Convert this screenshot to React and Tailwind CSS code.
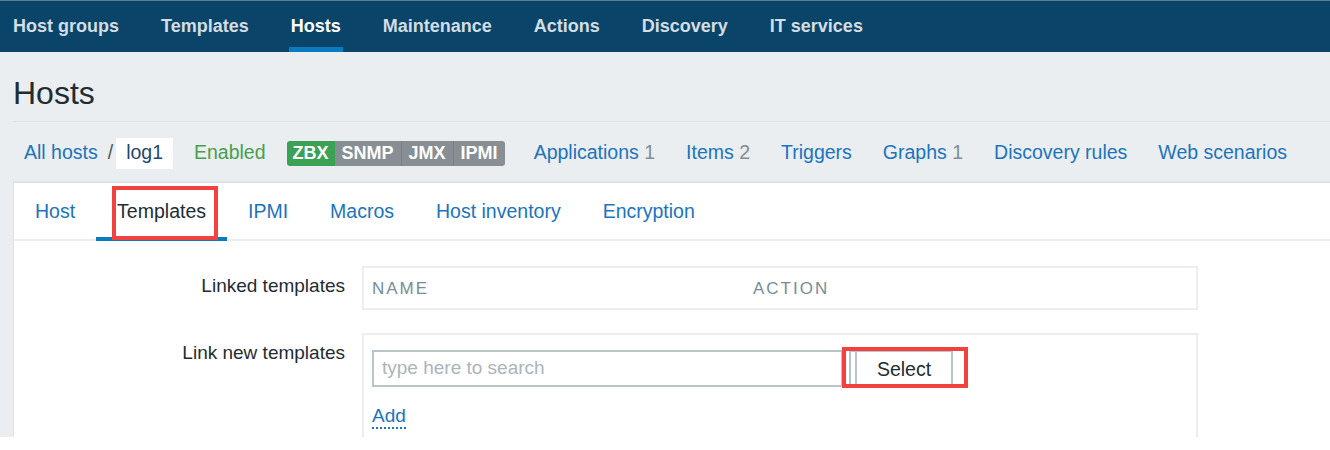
import React from 'react';

const navItems = ['Host groups', 'Templates', 'Hosts', 'Maintenance', 'Actions', 'Discovery', 'IT services'];

const hostLinks = [
  { label: 'Applications', count: '1' },
  { label: 'Items', count: '2' },
  { label: 'Triggers' },
  { label: 'Graphs', count: '1' },
  { label: 'Discovery rules' },
  { label: 'Web scenarios' },
];

const tabs = ['Host', 'Templates', 'IPMI', 'Macros', 'Host inventory', 'Encryption'];

const App = () => {
  return (
    <div className="w-[1330px] h-[450px] bg-white font-['Liberation_Sans',Arial,sans-serif] overflow-hidden">
      <div className="h-[437px] bg-[#ebeef0] overflow-hidden flex flex-col">
        {/* Top menu */}
        <nav className="h-[52px] shrink-0 bg-[#0a4569] border-t border-[#5d7f95] flex pl-[11px] gap-[38px]">
          {navItems.map((item) => (
            <a
              key={item}
              className={`h-full flex items-center pt-[4px] px-[2px] border-b-[5px] text-[18px] font-bold ${
                item === 'Hosts' ? 'text-white border-[#0b7bc0]' : 'text-[#d3dde4] border-transparent'
              }`}
            >
              {item}
            </a>
          ))}
        </nav>

        {/* Page title */}
        <h1 className="mt-[25px] ml-[13px] text-[32px] leading-none text-[#1f2c33]">Hosts</h1>

        {/* Host navigation */}
        <div className="mt-[12px] ml-[13px] h-[62px] shrink-0 border-t border-b-2 border-[#dde3e7] flex items-center pt-[3px] pl-[11px] text-[19.5px]">
          <a className="text-[#1b74bd]">All hosts</a>
          <span className="ml-[10px] text-[#4a5a63]">/</span>
          <span className="ml-[3px] bg-white h-[31px] px-[10px] flex items-center text-[#24466e]">log1</span>
          <span className="ml-[21px] text-[#46a04b]">Enabled</span>
          <div className="ml-[21px] flex h-[25px] text-[18px] font-bold text-white">
            <span className="bg-[#3aa155] px-[6px] flex items-center rounded-l-[3px]">ZBX</span>
            <span className="bg-[#878f94] px-[7px] flex items-center">SNMP</span>
            <span className="bg-[#878f94] px-[7px] flex items-center border-l border-[#7a8287]">JMX</span>
            <span className="bg-[#878f94] px-[7px] flex items-center border-l border-[#7a8287] rounded-r-[3px]">IPMI</span>
          </div>
          <div className="ml-[29px] flex gap-[31px]">
            {hostLinks.map((l) => (
              <a key={l.label} className="text-[#1b74bd]">
                {l.label}
                {l.count && <span className="text-[#7f8d95]"> {l.count}</span>}
              </a>
            ))}
          </div>
        </div>

        {/* Form panel */}
        <div className="ml-[13px] flex-1 bg-white border-l border-[#dde3e7]">
          <div className="flex h-[58px] border-b-2 border-[#ebeef0]">
            {tabs.map((t) => (
              <div
                key={t}
                className={`relative h-[58px] -mb-[2px] pt-[3px] px-[21px] flex items-center border-b-4 text-[19.5px] ${
                  t === 'Templates' ? 'border-[#0b7bc0] text-[#1f2c33]' : 'border-transparent text-[#1b74bd]'
                }`}
              >
                {t}
                {t === 'Templates' && (
                  <span className="absolute left-[16px] top-[3px] w-[106px] h-[54px] border-4 border-[#f2423f]" />
                )}
              </div>
            ))}
          </div>

          <div className="pt-[25px]">
            <div className="flex">
              <div className="w-[331px] pt-[6px] text-right text-[19px] text-[#1f2c33]">Linked templates</div>
              <div className="ml-[17px] w-[836px] h-[44px] border-2 border-[#ebeef0] flex items-center pt-[2px] pl-[8px] text-[17px] tracking-[2px] text-[#768d99]">
                <span className="w-[381px]">NAME</span>
                <span>ACTION</span>
              </div>
            </div>

            <div className="flex mt-[23px]">
              <div className="w-[331px] pt-[6px] text-right text-[19px] text-[#1f2c33]">Link new templates</div>
              <div className="ml-[17px] w-[836px] h-[120px] border-2 border-[#ebeef0] pl-[8px] pt-[15px]">
                <div className="relative flex items-center">
                  <div className="w-[471px] h-[37px] border-2 border-[#b8c5cb] flex items-center pl-[8px] text-[19px] text-[#aab5bb]">
                    type here to search
                  </div>
                  <div className="ml-[6px] w-[104px] h-[37px] border-2 border-[#b8c5cb] flex items-center">
                    <div className="h-full w-[6px] border-r-2 border-[#b8c5cb]" />
                    <span className="flex-1 text-center text-[19.5px] text-[#1f2c33] pt-[2px]">Select</span>
                  </div>
                  <span className="absolute left-[470px] top-[-3px] w-[126px] h-[41px] border-4 border-[#f2423f]" />
                </div>
                <a className="inline-block mt-[18px] text-[19px] leading-[22px] text-[#1b74bd] border-b-2 border-dotted border-[#1b74bd]">
                  Add
                </a>
              </div>
            </div>
          </div>
        </div>
      </div>
    </div>
  );
};

export default App;
